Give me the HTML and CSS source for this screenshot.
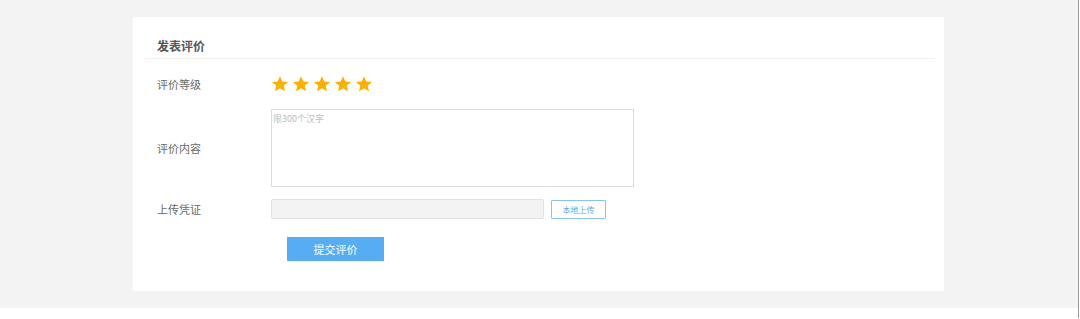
FILE: index.html
```html
<!DOCTYPE html>
<html lang="zh">
<head>
<meta charset="utf-8">
<link rel="stylesheet" href="styles.css">
</head>
<body>
<div class="page">
  <div class="card">
    <div class="card-head"><h2 class="title">发表评价</h2></div>
    <div class="row row-rate">
      <div class="label">评价等级</div>
      <div class="stars">
        <svg class="star" viewBox="0 0 24 24"><path d="M12 1.5l3.1 7 7.6.7-5.8 5 1.8 7.5L12 17.8 5.3 21.7l1.8-7.5-5.8-5 7.6-.7z"/></svg>
        <svg class="star" viewBox="0 0 24 24"><path d="M12 1.5l3.1 7 7.6.7-5.8 5 1.8 7.5L12 17.8 5.3 21.7l1.8-7.5-5.8-5 7.6-.7z"/></svg>
        <svg class="star" viewBox="0 0 24 24"><path d="M12 1.5l3.1 7 7.6.7-5.8 5 1.8 7.5L12 17.8 5.3 21.7l1.8-7.5-5.8-5 7.6-.7z"/></svg>
        <svg class="star" viewBox="0 0 24 24"><path d="M12 1.5l3.1 7 7.6.7-5.8 5 1.8 7.5L12 17.8 5.3 21.7l1.8-7.5-5.8-5 7.6-.7z"/></svg>
        <svg class="star" viewBox="0 0 24 24"><path d="M12 1.5l3.1 7 7.6.7-5.8 5 1.8 7.5L12 17.8 5.3 21.7l1.8-7.5-5.8-5 7.6-.7z"/></svg>
      </div>
    </div>
    <div class="row row-content">
      <div class="label">评价内容</div>
      <textarea class="textarea" placeholder="限300个汉字"></textarea>
    </div>
    <div class="row row-upload">
      <div class="label">上传凭证</div>
      <div class="file-input"></div>
      <button class="upload-btn">本地上传</button>
    </div>
    <div class="row row-submit">
      <button class="submit-btn">提交评价</button>
    </div>
  </div>
</div>
<div class="edge"></div>
</body>
</html>
```
FILE: styles.css
```css
html, body {
  margin: 0;
  padding: 0;
  background: #ffffff;
  font-family: "Microsoft YaHei", "Noto Sans CJK SC", "Liberation Sans", sans-serif;
}
body {
  display: flex;
  height: 319px;
  overflow: hidden;
}
.page {
  width: 1078px;
  height: 308px;
  background: #f3f3f3;
  padding: 17px 0 0 133px;
  box-sizing: border-box;
}
.edge {
  width: 1px;
  height: 318px;
  background: #9a9a9a;
}
.card {
  width: 811px;
  height: 274px;
  background: #ffffff;
  box-sizing: border-box;
  padding-top: 17px;
}
.card-head {
  margin: 0 9px 0 12px;
  border-bottom: 1px solid #efefef;
  height: 25px;
  box-sizing: border-box;
}
.title {
  margin: 0;
  padding-left: 12px;
  font-size: 12px;
  font-weight: bold;
  color: #555555;
  line-height: 24px;
}
.row {
  display: flex;
  align-items: center;
  padding-left: 24px;
}
.label {
  width: 114px;
  flex: none;
  font-size: 11px;
  color: #6a6a6a;
}
.row-rate {
  margin-top: 15px;
  height: 20px;
}
.stars {
  display: flex;
  gap: 3px;
}
.star {
  width: 18px;
  height: 18px;
  fill: #f9b000;
}
.row-content {
  margin-top: 15px;
}
.textarea {
  width: 363px;
  height: 78px;
  box-sizing: border-box;
  border: 1px solid #dcdcdc;
  resize: none;
  padding: 2px 1px;
  margin: 0;
  font-family: inherit;
  font-size: 9px;
  color: #666;
  outline: none;
}
.textarea::placeholder {
  color: #bdbdbd;
}
.row-upload {
  margin-top: 12px;
}
.file-input {
  width: 273px;
  height: 20px;
  box-sizing: border-box;
  background: #f3f3f3;
  border: 1px solid #e2e2e2;
  border-radius: 2px;
}
.upload-btn {
  margin-left: 7px;
  width: 55px;
  height: 19px;
  box-sizing: border-box;
  background: #ffffff;
  border: 1px solid #8cc3ec;
  border-radius: 1px;
  color: #5ea7dd;
  font-family: inherit;
  font-size: 8px;
  padding: 0;
}
.row-submit {
  margin-top: 18px;
  padding-left: 154px;
}
.submit-btn {
  width: 97px;
  height: 24px;
  border: none;
  background: #56adf2;
  color: #ffffff;
  font-family: inherit;
  font-size: 11px;
  padding: 0;
}
```
